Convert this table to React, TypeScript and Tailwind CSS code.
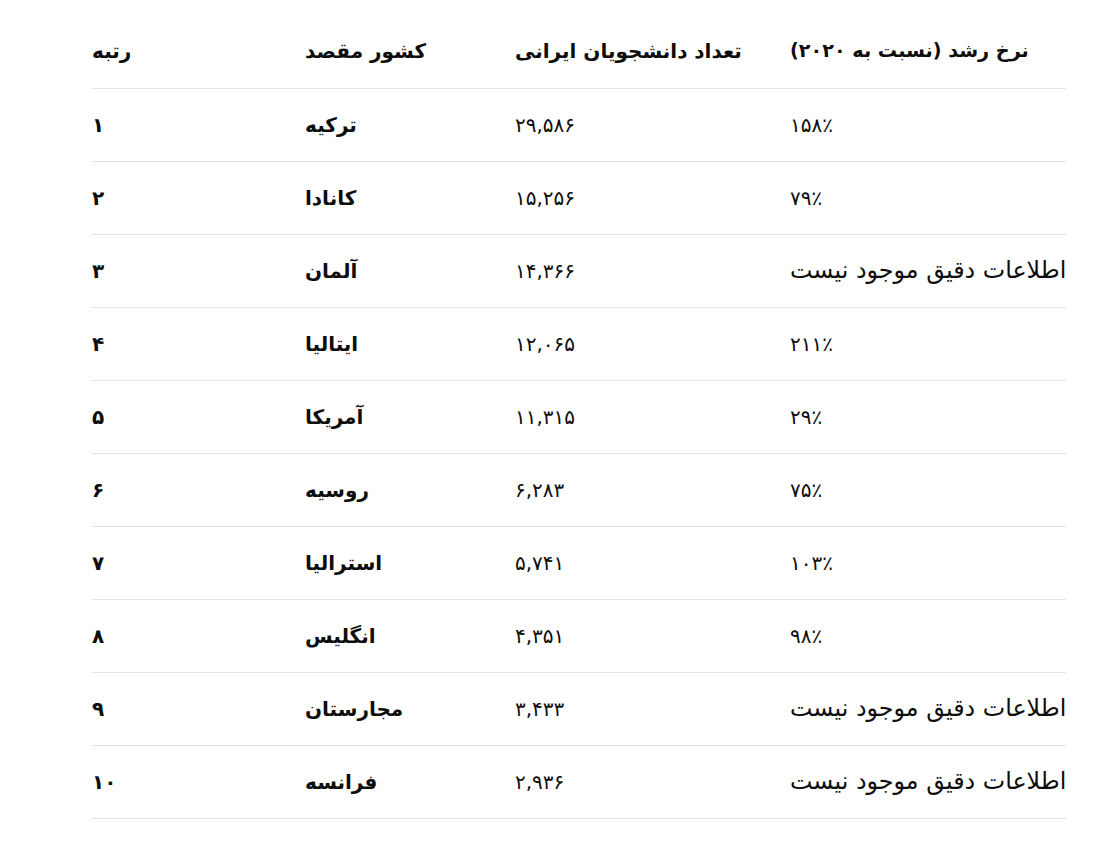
import React from "react";

const NA = "اطلاعات دقیق موجود نیست";

const rows = [
  { rank: "۱", country: "ترکیه", count: "۲۹,۵۸۶", growth: "۱۵۸٪" },
  { rank: "۲", country: "کانادا", count: "۱۵,۲۵۶", growth: "۷۹٪" },
  { rank: "۳", country: "آلمان", count: "۱۴,۳۶۶", growth: NA },
  { rank: "۴", country: "ایتالیا", count: "۱۲,۰۶۵", growth: "۲۱۱٪" },
  { rank: "۵", country: "آمریکا", count: "۱۱,۳۱۵", growth: "۲۹٪" },
  { rank: "۶", country: "روسیه", count: "۶,۲۸۳", growth: "۷۵٪" },
  { rank: "۷", country: "استرالیا", count: "۵,۷۴۱", growth: "۱۰۳٪" },
  { rank: "۸", country: "انگلیس", count: "۴,۳۵۱", growth: "۹۸٪" },
  { rank: "۹", country: "مجارستان", count: "۳,۴۳۳", growth: NA },
  { rank: "۱۰", country: "فرانسه", count: "۲,۹۳۶", growth: NA },
];

const App = () => {
  return (
    <div className="min-h-screen bg-white pt-[15px] font-['DejaVu_Sans',sans-serif] text-[20px] text-[#0d0d0d]">
      <table className="ml-[92px] w-[974px] table-fixed border-collapse">
        <colgroup>
          <col className="w-[213px]" />
          <col className="w-[210px]" />
          <col className="w-[275px]" />
          <col />
        </colgroup>
        <thead>
          <tr className="border-b border-[#e3e3e3]">
            <th className="h-[73px] whitespace-nowrap text-left align-middle font-semibold">رتبه</th>
            <th className="h-[73px] whitespace-nowrap text-left align-middle font-semibold">کشور مقصد</th>
            <th className="h-[73px] whitespace-nowrap text-left align-middle font-semibold">تعداد دانشجویان ایرانی</th>
            <th className="h-[73px] whitespace-nowrap text-left align-middle text-[19.2px] font-semibold">نرخ رشد (نسبت به ۲۰۲۰)</th>
          </tr>
        </thead>
        <tbody>
          {rows.map((r) => (
            <tr key={r.rank} className="border-b border-[#e3e3e3]">
              <td className="h-[73px] text-left align-middle font-semibold">{r.rank}</td>
              <td className="h-[73px] text-left align-middle font-semibold">{r.country}</td>
              <td className="h-[73px] text-left align-middle">{r.count}</td>
              <td className="h-[73px] whitespace-nowrap text-left align-middle">
                {r.growth === NA ? <span className="text-[23.8px] leading-none">{NA}</span> : r.growth}
              </td>
            </tr>
          ))}
        </tbody>
      </table>
    </div>
  );
};

export default App;
